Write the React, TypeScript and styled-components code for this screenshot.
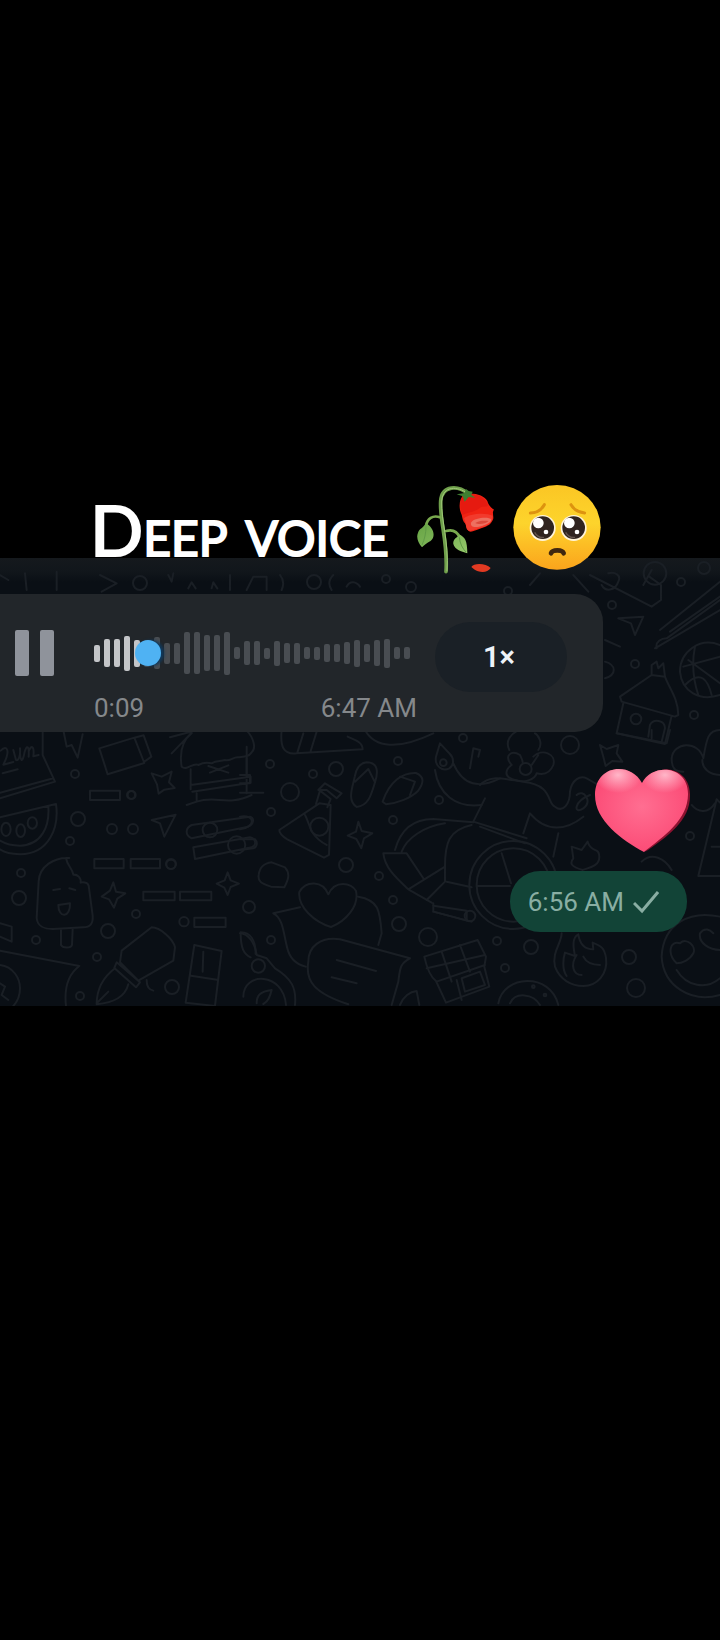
import React, { useState } from "react";
import styled, { createGlobalStyle } from "styled-components";

const GlobalStyle = createGlobalStyle`
  *, *::before, *::after { box-sizing: border-box; }
  html, body { margin: 0; background: #000; }
  body { font-family: Roboto, "Liberation Sans", sans-serif; color: #fff; }
`;

const Page = styled.main`
  min-height: 100vh;
  padding-top: 484px;
  background: #000;
  overflow: hidden;
`;

const Caption = styled.header`
  position: relative;
  z-index: 1;
  display: flex;
  align-items: flex-start;
  gap: 16px;
  height: 90px;
  padding-left: 90px;
  margin-bottom: -16px;
`;

const Title = styled.h1`
  display: flex;
  align-items: baseline;
  gap: 18px;
  min-width: 311px;
  margin: 0;
  font-family: Lato, sans-serif;
  font-size: 48px;
  line-height: 90px;
  font-weight: 400;
  white-space: nowrap;
  text-transform: uppercase;
  -webkit-text-stroke: 2px #fff;
`;

const Word = styled.span<{ $initial?: boolean }>`
  display: block;
  &::first-letter { font-size: ${(p) => (p.$initial ? "70px" : "48px")}; }
`;

const Chat = styled.section`
  position: relative;
  isolation: isolate;
  display: flex;
  flex-direction: column;
  align-items: flex-start;
  padding: 36px 0 74px;
  background: linear-gradient(#15191d 0, #11161b 14px, #0a0f15 24px, #0a0f15 100%);
`;

const Wallpaper = styled.svg`
  position: absolute;
  inset: 0;
  z-index: -1;
  width: 100%;
  height: 100%;
  fill: none;
  stroke: #1a1f25;
  stroke-width: 6;
  stroke-linecap: round;
  stroke-linejoin: round;
`;

const VoiceBubble = styled.article`
  display: flex;
  align-items: flex-start;
  max-width: 100%;
  padding: 28px 36px 8px 15px;
  border-radius: 0 28px 28px 0;
  background: #22262a;
`;

const PauseButton = styled.button`
  display: flex;
  justify-content: space-between;
  width: 39px;
  height: 46px;
  margin: 8px 40px 0 0;
  padding: 0;
  border: 0;
  background: none;

  &::before, &::after {
    content: "";
    width: 14px;
    border-radius: 2px;
    background: #8f939b;
  }
`;

const Player = styled.div`
  width: 323px;
  margin-top: 8px;
`;

const Track = styled.div`
  display: grid;
  width: 316px;
  height: 46px;
  > * { grid-area: 1 / 1; }
`;

const Wave = styled.div`
  display: flex;
  align-items: center;
  justify-content: space-between;
`;

const Bar = styled.span<{ $played: boolean }>`
  width: 6px;
  border-radius: 2px;
  background: ${(p) => (p.$played ? "#c3c5c8" : "#494d52")};
`;

const Seek = styled.input`
  appearance: none;
  width: 100%;
  height: 46px;
  margin: 0;
  background: transparent;

  &::-webkit-slider-thumb {
    appearance: none;
    width: 26px;
    height: 26px;
    border-radius: 50%;
    background: #4fb2f3;
    box-shadow: 3px 0 3px #10395c;
  }
`;

const Times = styled.div`
  display: flex;
  justify-content: space-between;
  margin-top: 16px;
  font-size: 26px;
  line-height: 32px;
  color: #85888b;
`;

const SpeedButton = styled.button`
  width: 132px;
  height: 70px;
  margin-left: 18px;
  padding: 0 4px 0 0;
  border: 0;
  border-radius: 35px;
  background: #1a2026;
  color: #eef3f8;
  font-family: inherit;
  font-size: 29px;
  font-weight: 600;
`;

const Sent = styled.article`
  align-self: flex-end;
  display: flex;
  flex-direction: column;
  align-items: flex-end;
  margin-top: 35px;
  padding-right: 33px;
`;

const Heart = styled.svg`
  width: 98px;
  height: 88px;
  margin-right: -4px;
`;

const Stamp = styled.div`
  display: flex;
  align-items: center;
  gap: 9px;
  height: 61px;
  margin-top: 16px;
  padding: 0 28px 0 18px;
  border-radius: 30px;
  background: #124437;
  color: #89aea3;
  font-size: 26px;
`;

const bars = [17, 28, 28, 35, 27, 27, 32, 21, 21, 42, 42, 36, 36, 43, 12, 24, 24, 11, 25, 20, 21, 12, 13, 18, 18, 22, 27, 18, 26, 29, 12, 12];

const dots: [number, number, number][] = [
  [75, 216, 4], [78, 261, 7], [131, 237, 4], [112, 271, 5], [133, 271, 5], [70, 283, 4], [171, 306, 5],
  [21, 315, 4], [19, 340, 7], [136, 356, 4], [108, 373, 7], [36, 382, 4], [97, 399, 4], [172, 429, 7],
  [80, 438, 4], [249, 349, 6], [270, 206, 4], [313, 216, 4], [336, 211, 7], [290, 234, 9], [271, 254, 4],
  [398, 203, 4], [393, 262, 4], [346, 307, 7], [379, 318, 4], [393, 342, 4], [399, 366, 7], [428, 379, 9],
  [271, 382, 4], [439, 242, 4], [463, 180, 4], [570, 187, 9], [690, 278, 4], [497, 383, 4], [531, 389, 7],
  [505, 410, 4], [629, 399, 7], [636, 430, 9], [140, 25, 7], [314, 24, 7], [386, 21, 4], [411, 29, 5],
  [508, 33, 4], [704, 10, 6], [681, 24, 4], [612, 47, 4], [635, 106, 4], [694, 157, 4],
];

function Doodles() {
  return (
    <Wallpaper viewBox="0 0 720 448" preserveAspectRatio="xMidYMid slice" aria-hidden="true">
      <g strokeWidth="2">
        {dots.map(([x, y, r]) => <circle key={`${x}-${y}`} cx={x} cy={y} r={r} />)}
      </g>

      {/* cake, melon, ice cream, pens and sparkles on the left */}
      <g transform="translate(0 172) scale(.3333)">
        <path d="M128 0v75L165 155 0 205M0 188L160 145M0 110M2 62c20-20 30 0 8 42l30-8M40 60l8 30c8 5 14-15 12-35 0 45 8 45 14 10 6-20 14-20 12 15M86 65c6-20 18-20 14 14l16-4M8 130l45-12M0 262l168-40c10 70-20 150-108 151C30 372 10 365 0 358M145 230c4 60-20 115-85 117-25 0-45-6-60-15" />
        <ellipse cx="18" cy="298" rx="14" ry="20" /><ellipse cx="62" cy="302" rx="13" ry="19" /><ellipse cx="97" cy="279" rx="14" ry="17" />
        <path d="M190 0l10 50 15-5 18 38 15-70M298 55l105-32 30 76-110 34zM403 23l28-7 23 64-22 16M270 182h90v28h-90zM455 130l30 10 30-15-8 32 17 17-31 5-17 12-5-28zM455 270l72-16-34 66-13-40z" />
        <path d="M510 22l60-16M515 70l60-62M545 110c-8-50 5-80 30-100M545 110c15 15 35-15 50-5 15-8 25-8 40-5 15-10 25-5 40-10 15 5 25-10 40-8 15-2 30 0 40-15 15-12 5-45-15-65M572 118v60M572 165l180-25v18l-175 27M590 190v25c60-20 90 15 165-20M740 85v105M560 225l30-10M625 108l60 20M630 128l55-22" />
        <path d="M575 285l175-25c15 5 10 25-5 30l-170 35c-20-10-20-30 0-40zM580 352l170-30c20 5 20 25 5 30l-170 35z" /><circle cx="630" cy="300" r="22" /><circle cx="710" cy="345" r="26" />
        <path d="M283 387h88v28h-88zM392 387h88v28h-88z" /><circle cx="513" cy="403" r="14" /><circle cx="395" cy="195" r="12" />
        <path d="M208 384c-45-3-90 25-92 70l-6 110c2 25 25 34 50 33l90-5c20 0 30-10 28-35l-12-90c-3-12-20-10-24-9 2-15-10-25-22-24-3-20-18-25-22-50zM183 600v45c5 10 30 10 33 0l2-48M160 480l20-3M208 475l18 5M175 525l35-5c2 45-35 45-35 5z" />
        <path d="M340 457l8 28 28 5-24 16-10 27-15-25-22-8 25-18zM683 427l9 24 25 10-25 10-9 24-10-22-23-12 24-10zM430 485h94v26h-94zM540 485h94v26h-94zM583 563h94v28h-94z" /><circle cx="552" cy="575" r="14" />
        <path d="M0 662l238 46c-40 30-45 75-40 120M0 705c40 5 60 40 60 70 0 25-8 40-20 53M0 760l15 10-10 25 20 15M0 580l35 10v45L0 620" />
        <path d="M455 592c25 0 65 35 70 60l-5 40-105 60-55-55 5-35zM350 697l70 60-12 15-65-58zM345 715c-40 30-55 70-55 108 50-5 85-20 95-60M290 820l35-35M440 750c0 20 10 30 20 32" />
        <path d="M583 645l82 18-20 165-88-10zM573 737l78 12M610 665l-2 60M722 607c30 0 45 25 45 65M722 607c0 50 10 65 30 75" />
      </g>

      {/* pizza, slippers, hearts and letters in the middle */}
      <g transform="translate(240 172) scale(.3333)">
        <path d="M125 0c-5 50 5 75 45 70l198-12c0-25-30-30-45-38M190 10l-18 58M230 5l-18 58M375 0c30 55 100 60 205 10M20 50v80M0 135h30v25H0M0 188h70" />
        <path d="M118 300l120-80 34 5-5 150-15 8-110-55c-15-8-25-20-24-28zM235 180l20-20 50 30-15 15-30-25zM228 222l12-40 32 25-10 25M195 255c15 25 10 60 65 90" /><circle cx="238" cy="290" r="27" />
        <path d="M380 97c35 0 35 30 25 60-12 40-20 70-55 74-30-20-12-60-6-90 4-25 15-42 36-44zM345 155l40-38 20 40M428 215c20-60 60-88 100-86 25 10 25 30 5 55-20 20-60 35-95 39zM480 140l45 15-15 40M355 275l10 28 32 7-25 15-8 30-15-28-26-10 25-12z" />
        <path d="M0 260c45-8 50 30 0 38M0 328h45c10 10 5 25-5 27L0 360M95 397l40 15c18 20 8 40-2 60l-40-2c-30-10-40-15-37-35 3-25 15-35 39-38z" />
        <path d="M265 493c20-45 70-35 83-10 10 45-30 90-75 108-50-15-100-60-95-105 20-35 70-35 87 7zM180 532l-80 18c30 15 30 60 42 105 8 35 35 50 55 55M355 500c60 10 65 40 70 110l-10 35M205 695c0-45 35-75 95-67l210 57c-30 15-30 30-35 70l-20 70M205 695c-10 60 20 95 120 128M290 690l118 33M275 742l75 18" />
        <path d="M465 360c15-55 50-93 115-93l120 10M485 365c15-40 65-75 130-85M430 370h70l50 75M430 370c5 45 40 75 75 108l70 40M505 478l110-68v45l-55 55M615 410c0-70 10-110 80-125M620 455l75 17M580 520v25l115 30" />
        <path d="M585 120c10 70 60 115 140 105M600 40l-12 40c-5 30 20 45 40 35 15-10 15-30 0-45zM640 100c30 70 80 75 140 45M690 115l10-60 20 5-5 20" /><circle cx="610" cy="98" r="10" />
        <path d="M553 680l160-50 25 50-5 30 15 60-130 48-30-65c-20-15-30-50-35-73zM605 665l30 90M660 645l30 80M560 715l175-40M590 755l145-50M650 750l15 60M665 745l55-20 15 40-60 20z" />
        <path d="M0 610c25 0 45 30 50 65l30 10 25 30c50 30 65 60 60 110M10 800c0-75 120-75 128 25M50 820c0-25 10-35 45-40-5 20-10 35-25 42" /><circle cx="55" cy="708" r="20" /><path d="M480 825c10-25 30-40 50-42l8 42" />
      </g>

      {/* unicorn, wheel, fire and smiling face on the right */}
      <g transform="translate(420 172) scale(.3333)">
        <path d="M268 60c-15-30 10-50 20-55M355 60c15-20 0-45-10-50M285 150c-40-10-25-35-10-45-25-30 0-45 25-30M340 80c25-25 70-10 60 25-10 25-30 30-50 25-5 20-40 30-65 20M300 75c5 10 8 15 8 22M355 75l-20 30" /><circle cx="317" cy="117" r="18" />
        <path d="M180 165c30-30 60-20 130-10 90 10 70 65 95 75 25 20 45-10 45-45 5-35 30-50 50-40l35 20M195 205l-35 70 160 50M180 290l135 50M310 310l20-60c50 60 110 50 160 10M470 195c20-20 50 20 20 40s-30-20 20-40M415 310l-15 70" />
        <circle cx="280" cy="465" r="132" /><circle cx="280" cy="465" r="110" /><path d="M245 370l28 90M170 468h100M40 527l100 15v30L40 545" /><circle cx="150" cy="558" r="16" />
        <path d="M455 350l30 10 18-25c10 35 35 15 35 45 0 25-20 30-50 40-35-10-40-20-28-35zM665 395c30-30 70-10 90 25M835 438l55-230 10 10M835 438h65M875 350h25M540 45l20 12 35-12-5 25 17 25-30-2-20 15-7-28z" />
        <path d="M590 10l150 30 10-40M695 0v25M755 85c5-50 80-55 95 0 10-60 15-85 50-85M755 85c0 30 10 40 35 40M815 225c20 25 50 25 70-5M847 90c0 25 20 45 53 45" />
        <path d="M425 610c0 30-30 55-20 100 15 40 50 58 85 58 40 0 75-35 68-85-5-30-15-35-40-45l2 20c-20 0-40-10-45-45-20 10-15 40-10 65l-30-10c-5 15-10 50 5 70M470 675c-20 30-10 60 15 60M490 680c10 20 30 25 50 25" />
        <path d="M900 560c-90-20-170 20-175 120 5 90 90 140 175 115M770 700c-30-30-20-70 10-60 20-20 50 10 40 30-10 20-35 30-50 30zM840 610c15-20 30-10 40 0M840 610c-5 30 30 50 60 50M770 720c30 50 90 60 130 25M235 820c15-85 155-95 180 5M270 820c15-35 70-30 90 5" />
        <circle cx="340" cy="770" r="4" /><circle cx="375" cy="795" r="4" />
      </g>

      {/* brush, sparkler, hut and ball above */}
      <g transform="translate(360 -8) scale(.3333)">
        <path d="M510 105l30-35M640 75l45 50M690 75l185 95 28-20v-45l-35-25M725 105c10 20 40 20 50-10 10-20-10-30-30-25M850 105l25-45M900 240L1080 95M930 245l150-105M885 295l195-115M890 295c-5-20 15-30 30-30l160-115M775 205l75-5-25 55-12-35z" /><circle cx="885" cy="70" r="34" />
        <path d="M780 440l95-65 40 5c10 30 40 65 40 115l-10 5-160-45zM790 460l-20 90 145 32 20-85M875 375v-30l15-10 5 20 15-15 5 40M865 560l5-35c10-20 45-15 45 10l-10 40M735 270l45 20M735 335c35 10 35 40 0 50" /><circle cx="828" cy="507" r="16" />
        <path d="M1080 285c-60-25-120 20-120 80 5 60 60 90 120 70M1005 290c-10 50-5 100 10 145M970 350l110-30M985 330l95 70M975 405c50-50 70-10 80 30" />
      </g>
      <g transform="translate(0 -8) scale(.3333)">
        <path d="M75 70l5 50M170 65v55M0 75l25 15M300 75l50 25-45 25M505 75l10 20 5-25M565 115l10-18 12 18M635 115l5-18 12 18M690 75v45M740 120l20-40h40v40M840 75c12 15 12 30 5 45M1000 75c-15 15-15 30-5 45M1040 110c10-20 30-15 40 0" />
      </g>
    </Wallpaper>
  );
}

function WiltedRose() {
  return (
    <svg width="79" height="90" viewBox="51 45 237 270" role="img" aria-label="Wilted rose">
      <defs>
        <linearGradient id="leaf" x1="0" y1="0" x2="1" y2="1"><stop offset="0" stopColor="#66a344" /><stop offset="1" stopColor="#94c76a" /></linearGradient>
      </defs>
      <g fill="none" stroke="#79a94e" strokeLinecap="round">
        <path d="M204 74c-28-24-78-28-82 22-4 60 22 120 16 212" strokeWidth="11" stroke="#6f9f4b" />
        <path d="M120 145c-22-8-38 4-42 25M138 186c20-6 34 2 42 20" strokeWidth="8" />
        <path d="M201 72c-28-20-72-24-76 24-2 60 22 120 16 210" strokeWidth="3" stroke="#a1c979" />
      </g>
      <path d="M78 163c14 8 26 24 22 40-4 16-18 14-34 32-12-14-18-30-12-44 4-12 16-14 24-28zM180 197c14 8 22 16 22 56-20-6-38-12-42-28-2-14 10-20 20-28z" fill="url(#leaf)" />
      <path d="M78 172c0 20-4 38-12 56M178 205c2 20 10 34 20 44" stroke="#5f9a46" strokeWidth="3" fill="none" />
      <path d="M192 76c24-8 62 2 70 20 4 12 8 18 20 26-8 10 2 22-4 32-8 16-18 18-40 26-10 2-24 12-32 6-8-6-4-18-14-26-6-8-4-18-10-30-6-18-4-40 10-54z" fill="#f02213" />
      <path d="M192 76c-14 18-14 40-4 62 10-8 38-8 52-22 10-6 24 0 24-8-6-20-36-40-72-32z" fill="#e61a10" />
      <path d="M192 148c16-16 68-18 86-8 0 20-16 32-42 38-10 2-24 12-32 6-8-6-4-18-12-36z" fill="#f23a2c" />
      <path d="M214 160c8-14 54-18 60-8-2 14-48 28-58 20-4-4-4-8-2-12z" fill="#ed7060" />
      <path d="M226 162c10-8 30-8 40-6-8 8-30 12-40 6z" fill="#dc4a3b" />
      <path d="M170 76l24-4 4-12 8 6 12 2-4 10 12 8-20-2-12 14-6-16z" fill="#3f7f31" />
      <path d="M214 294c6-12 44-12 58 3-8 12-22 14-38 10-8-2-14-8-20-13z" fill="#e23a22" />
    </svg>
  );
}

function PleadingFace() {
  return (
    <svg width="90" height="88" viewBox="333 45 270 264" role="img" aria-label="Pleading face">
      <defs>
        <linearGradient id="skin" x1="0" y1="0" x2="0" y2="1"><stop offset="0" stopColor="#fbc624" /><stop offset=".45" stopColor="#fdd42c" /><stop offset="1" stopColor="#fba41c" /></linearGradient>
      </defs>
      <ellipse cx="468" cy="175" rx="131" ry="127" fill="url(#skin)" />
      <path d="M388 132q28 0 42-25M510 107q14 23 41 25" fill="none" stroke="#dd930f" strokeWidth="9" strokeLinecap="round" />
      {[425, 518].map((x) => (
        <g key={x}>
          <circle cx={x} cy="177" r="39" fill="#fff3d8" />
          <circle cx={x} cy="176" r="34" fill="#30241f" />
          <circle cx={x - 13} cy="162" r="16" fill="#fff" />
          <circle cx={x + 10} cy="189" r="7" fill="#fff" />
          <path d={`M${x - 24} 190q10 18 28 15`} stroke="#65564e" strokeWidth="4" fill="none" />
        </g>
      ))}
      <path d="M450 253c4-12 34-12 38 0" fill="none" stroke="#40270f" strokeWidth="14" strokeLinecap="round" />
    </svg>
  );
}

export default function App() {
  const [position, setPosition] = useState(14);
  return (
    <>
      <GlobalStyle />
      <Page>
        <Caption>
          <Title>
            <Word $initial>Deep</Word>{" "}
            <Word>voice</Word>
          </Title>
          <WiltedRose />
          <PleadingFace />
        </Caption>
        <Chat>
          <Doodles />
          <VoiceBubble>
            <PauseButton type="button" aria-label="Pause" />
            <Player>
              <Track>
                <Wave aria-hidden="true">
                  {bars.map((height, i) => (
                    <Bar key={i} $played={i * 3 < position} style={{ height }} />
                  ))}
                </Wave>
                <Seek type="range" min="0" max="100" aria-label="Seek" value={position} onChange={(e) => setPosition(Number(e.target.value))} />
              </Track>
              <Times><span>0:09</span><time>6:47 AM</time></Times>
            </Player>
            <SpeedButton type="button">1×</SpeedButton>
          </VoiceBubble>
          <Sent>
            <Heart viewBox="0 0 98 88" role="img" aria-label="Pink heart">
              <defs>
                <radialGradient id="pink" cx=".5" cy=".45" r=".6"><stop offset="0" stopColor="#ff6e91" /><stop offset="1" stopColor="#fb4672" /></radialGradient>
                <radialGradient id="shine"><stop offset="0" stopColor="#ffb6c8" /><stop offset="1" stopColor="#ffb6c8" stopOpacity="0" /></radialGradient>
                <clipPath id="heartShape"><path d="M49 16C59-4 95-2 95 27c0 26-24 42-44 58C29 73 2 54 2 28 2-2 37-6 49 16z" /></clipPath>
              </defs>
              <path d="M50 16C60-4 96-3 97 27c1 26-22 42-45 58 18-22 35-40 34-60z" fill="#8c1230" />
              <g clipPath="url(#heartShape)">
                <rect width="98" height="88" fill="url(#pink)" />
                <ellipse cx="25" cy="8" rx="24" ry="18" fill="url(#shine)" />
                <ellipse cx="72" cy="8" rx="24" ry="18" fill="url(#shine)" />
              </g>
            </Heart>
            <Stamp>
              <time>6:56 AM</time>
              <svg width="26" height="24" viewBox="0 0 26 24" fill="none" stroke="currentColor" strokeWidth="3" role="img" aria-label="Sent">
                <path d="M1 13l8 8L25 2" />
              </svg>
            </Stamp>
          </Sent>
        </Chat>
      </Page>
    </>
  );
}
